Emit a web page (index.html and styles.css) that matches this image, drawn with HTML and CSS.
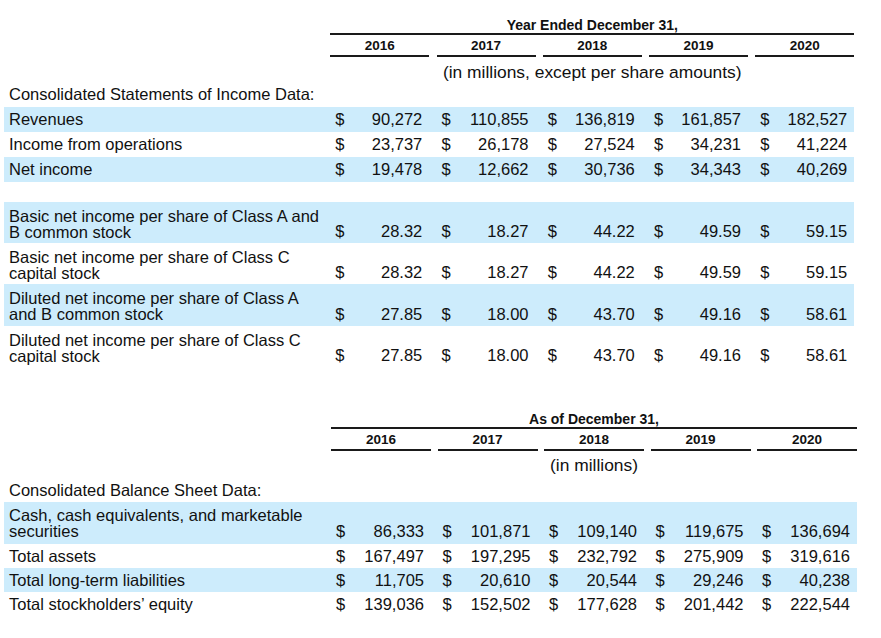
FILE: index.html
```html
<!DOCTYPE html>
<html lang="en">
<head>
<meta charset="utf-8">
<title>Selected Financial Data</title>
<link rel="stylesheet" href="styles.css">
</head>
<body>
<div class="report">

  <section class="table income">
    <div class="row head-title"><div></div><div class="span">Year Ended December 31,</div></div>
    <div class="row head-years">
      <div></div>
      <div class="yr">2016</div><div class="yr">2017</div><div class="yr">2018</div><div class="yr">2019</div><div class="yr">2020</div>
    </div>
    <div class="row head-sub"><div></div><div class="span">(in millions, except per share amounts)</div></div>
    <div class="section-label">Consolidated Statements of Income Data:</div>

    <div class="row data shaded">
      <div class="label">Revenues</div>
      <div class="cell"><span>$</span><span>90,272</span></div>
      <div class="cell"><span>$</span><span>110,855</span></div>
      <div class="cell"><span>$</span><span>136,819</span></div>
      <div class="cell"><span>$</span><span>161,857</span></div>
      <div class="cell"><span>$</span><span>182,527</span></div>
    </div>
    <div class="row data">
      <div class="label">Income from operations</div>
      <div class="cell"><span>$</span><span>23,737</span></div>
      <div class="cell"><span>$</span><span>26,178</span></div>
      <div class="cell"><span>$</span><span>27,524</span></div>
      <div class="cell"><span>$</span><span>34,231</span></div>
      <div class="cell"><span>$</span><span>41,224</span></div>
    </div>
    <div class="row data shaded">
      <div class="label">Net income</div>
      <div class="cell"><span>$</span><span>19,478</span></div>
      <div class="cell"><span>$</span><span>12,662</span></div>
      <div class="cell"><span>$</span><span>30,736</span></div>
      <div class="cell"><span>$</span><span>34,343</span></div>
      <div class="cell"><span>$</span><span>40,269</span></div>
    </div>

    <div class="spacer"></div>

    <div class="row data tall shaded">
      <div class="label">Basic net income per share of Class A and<br>B common stock</div>
      <div class="cell"><span>$</span><span>28.32</span></div>
      <div class="cell"><span>$</span><span>18.27</span></div>
      <div class="cell"><span>$</span><span>44.22</span></div>
      <div class="cell"><span>$</span><span>49.59</span></div>
      <div class="cell"><span>$</span><span>59.15</span></div>
    </div>
    <div class="row data tall">
      <div class="label">Basic net income per share of Class C<br>capital stock</div>
      <div class="cell"><span>$</span><span>28.32</span></div>
      <div class="cell"><span>$</span><span>18.27</span></div>
      <div class="cell"><span>$</span><span>44.22</span></div>
      <div class="cell"><span>$</span><span>49.59</span></div>
      <div class="cell"><span>$</span><span>59.15</span></div>
    </div>
    <div class="row data tall taller shaded">
      <div class="label">Diluted net income per share of Class A<br>and B common stock</div>
      <div class="cell"><span>$</span><span>27.85</span></div>
      <div class="cell"><span>$</span><span>18.00</span></div>
      <div class="cell"><span>$</span><span>43.70</span></div>
      <div class="cell"><span>$</span><span>49.16</span></div>
      <div class="cell"><span>$</span><span>58.61</span></div>
    </div>
    <div class="row data tall">
      <div class="label">Diluted net income per share of Class C<br>capital stock</div>
      <div class="cell"><span>$</span><span>27.85</span></div>
      <div class="cell"><span>$</span><span>18.00</span></div>
      <div class="cell"><span>$</span><span>43.70</span></div>
      <div class="cell"><span>$</span><span>49.16</span></div>
      <div class="cell"><span>$</span><span>58.61</span></div>
    </div>
  </section>

  <section class="table balance">
    <div class="row head-title"><div></div><div class="span">As of December 31,</div></div>
    <div class="row head-years">
      <div></div>
      <div class="yr">2016</div><div class="yr">2017</div><div class="yr">2018</div><div class="yr">2019</div><div class="yr">2020</div>
    </div>
    <div class="row head-sub"><div></div><div class="span">(in millions)</div></div>
    <div class="section-label">Consolidated Balance Sheet Data:</div>

    <div class="row data tall shaded">
      <div class="label">Cash, cash equivalents, and marketable<br>securities</div>
      <div class="cell"><span>$</span><span>86,333</span></div>
      <div class="cell"><span>$</span><span>101,871</span></div>
      <div class="cell"><span>$</span><span>109,140</span></div>
      <div class="cell"><span>$</span><span>119,675</span></div>
      <div class="cell"><span>$</span><span>136,694</span></div>
    </div>
    <div class="row data">
      <div class="label">Total assets</div>
      <div class="cell"><span>$</span><span>167,497</span></div>
      <div class="cell"><span>$</span><span>197,295</span></div>
      <div class="cell"><span>$</span><span>232,792</span></div>
      <div class="cell"><span>$</span><span>275,909</span></div>
      <div class="cell"><span>$</span><span>319,616</span></div>
    </div>
    <div class="row data shaded">
      <div class="label">Total long-term liabilities</div>
      <div class="cell"><span>$</span><span>11,705</span></div>
      <div class="cell"><span>$</span><span>20,610</span></div>
      <div class="cell"><span>$</span><span>20,544</span></div>
      <div class="cell"><span>$</span><span>29,246</span></div>
      <div class="cell"><span>$</span><span>40,238</span></div>
    </div>
    <div class="row data">
      <div class="label">Total stockholders’ equity</div>
      <div class="cell"><span>$</span><span>139,036</span></div>
      <div class="cell"><span>$</span><span>152,502</span></div>
      <div class="cell"><span>$</span><span>177,628</span></div>
      <div class="cell"><span>$</span><span>201,442</span></div>
      <div class="cell"><span>$</span><span>222,544</span></div>
    </div>
  </section>

</div>
</body>
</html>
```

FILE: styles.css
```css
html, body {
  margin: 0;
  padding: 0;
  background: #ffffff;
}

body {
  font-family: "Liberation Sans", Arial, sans-serif;
  font-size: 16.5px;
  color: #111111;
}

.report {
  margin-left: 4px;
}

.table {
  --label: 319px;
  --col: 99px;
  --gap: 7.25px;
  width: calc(var(--label) + 5 * var(--col) + 5 * var(--gap));
}

.balance {
  --label: 320.5px;
  --col: 100px;
  --gap: 6.5px;
  margin-top: 42px;
}

.income {
  padding-top: 15px;
}

.row {
  display: grid;
  grid-template-columns: var(--label) repeat(5, var(--col));
  column-gap: var(--gap);
}

.span {
  grid-column: 2 / -1;
  text-align: center;
}

.head-title .span {
  font-weight: bold;
  font-size: 14px;
  line-height: 16px;
  padding-top: 2px;
  border-bottom: 2px solid #1a1a1a;
}

.yr {
  font-weight: bold;
  font-size: 13.5px;
  line-height: 18px;
  padding-top: 2px;
  text-align: center;
  border-bottom: 2px solid #1a1a1a;
}

.head-sub .span {
  font-size: 17.4px;
  line-height: 18px;
  margin-top: 6px;
}

.balance .head-sub .span {
  margin-top: 5px;
}

.section-label {
  line-height: 18px;
  padding: 4px 0 4px 5px;
}

.balance .section-label {
  padding: 7px 0 3px 5px;
}

.data {
  box-sizing: border-box;
  height: 25px;
  line-height: 25px;
}

.balance .data {
  height: 24px;
  padding-top: 1px;
  line-height: 23px;
}

.data.shaded {
  background: #cdecfc;
}

.label {
  padding-left: 5px;
  white-space: nowrap;
}

.cell {
  display: flex;
  justify-content: space-between;
  padding: 0 7px 0 5px;
  white-space: nowrap;
}

.data.tall,
.balance .data.tall {
  height: 41px;
  padding-top: 0;
  line-height: 16px;
}

.data.tall.taller,
.balance .data.tall {
  height: 42px;
}

.data.tall .label {
  padding-top: 6px;
}

.balance .data.tall .label {
  padding-top: 5px;
}

.data.tall .cell {
  align-self: end;
  padding-bottom: 4px;
}

.balance .data.tall .cell {
  padding-bottom: 5px;
}

.spacer {
  height: 20px;
}
```
